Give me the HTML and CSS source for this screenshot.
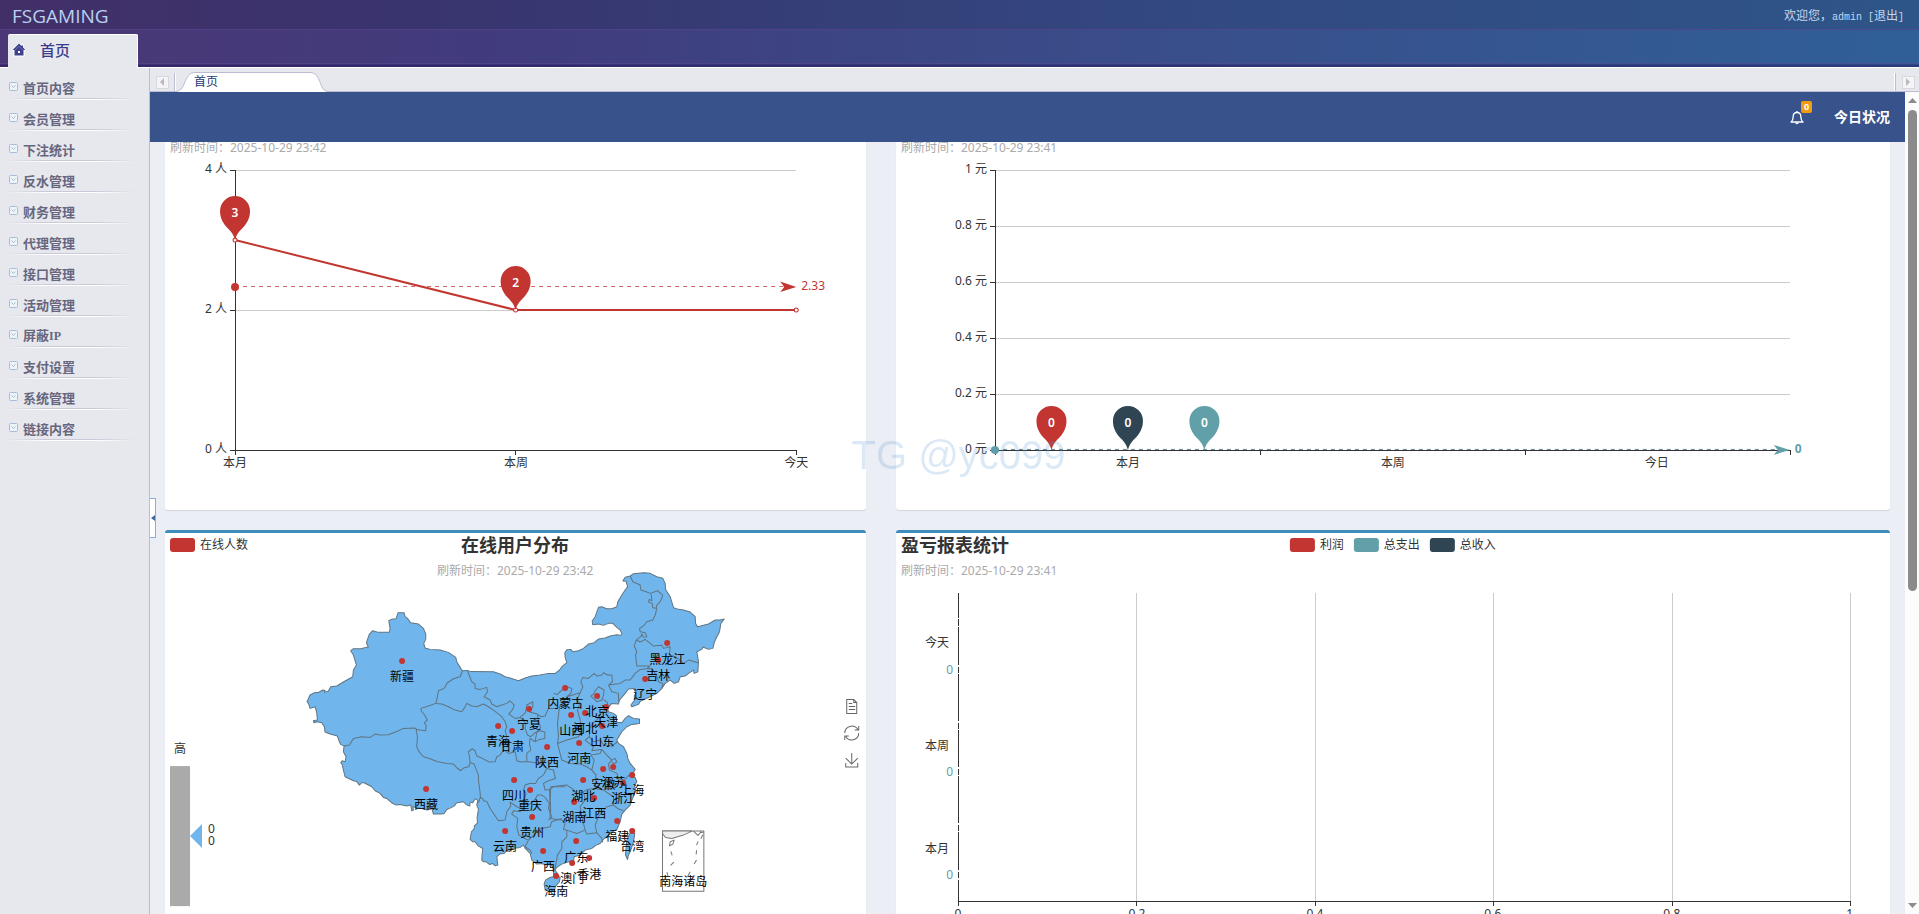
FILE: index.html
```html
<!DOCTYPE html>
<html lang="zh-CN">
<head>
<meta charset="utf-8">
<title>FSGAMING</title>
<link rel="stylesheet" href="styles.css">
</head>
<body>
<header class="topbar">
  <h1 class="brand">FSGAMING</h1>
  <p class="welcome">欢迎您，<span class="latin">admin [</span><a href="#logout">退出</a><span class="latin">]</span></p>
</header>
<nav class="mainnav">
  <a class="mainnav-item" href="#home">
    <svg class="home-icon" width="14" height="14" viewBox="0 0 14 14" aria-hidden="true"><path d="M7 0L0 6.500L1.500 8.500V13.500H13V8.500L14 6.500L11.500 4V1.500H9V2Z" fill="#fff"/><path d="M7 .5L.5 7H2.500V12.500H11.500V7H13.500L11 4.500V2.500H9.500V3Z" fill="#40408f"/><path d="M2.500 7.500L7 3.300L11.500 7.500" fill="none" stroke="#8c8cc0" stroke-width="0.600"/><rect x="6" y="8" width="2" height="2" fill="#fff"/></svg>
    首页
  </a>
</nav>
<div class="workspace">
  <aside class="sidebar">
    <svg width="0" height="0" class="defs" aria-hidden="true"><symbol id="chev" viewBox="0 0 9 9"><rect x=".5" y=".5" width="8" height="8" rx="1" fill="#eef3f8" stroke="#a9bdd6"/><path d="M2.500 3.500L4.500 5.500L6.500 3.500" fill="none" stroke="#a3bdd8"/></symbol></svg>
    <ul class="menu">
      <li><a href="#m1"><svg class="chev"><use href="#chev"/></svg>首页内容</a></li>
      <li><a href="#m2"><svg class="chev"><use href="#chev"/></svg>会员管理</a></li>
      <li><a href="#m3"><svg class="chev"><use href="#chev"/></svg>下注统计</a></li>
      <li><a href="#m4"><svg class="chev"><use href="#chev"/></svg>反水管理</a></li>
      <li><a href="#m5"><svg class="chev"><use href="#chev"/></svg>财务管理</a></li>
      <li><a href="#m6"><svg class="chev"><use href="#chev"/></svg>代理管理</a></li>
      <li><a href="#m7"><svg class="chev"><use href="#chev"/></svg>接口管理</a></li>
      <li><a href="#m8"><svg class="chev"><use href="#chev"/></svg>活动管理</a></li>
      <li><a href="#m9"><svg class="chev"><use href="#chev"/></svg><span>屏蔽<span class="menu-latin">IP</span></span></a></li>
      <li><a href="#m10"><svg class="chev"><use href="#chev"/></svg>支付设置</a></li>
      <li><a href="#m11"><svg class="chev"><use href="#chev"/></svg>系统管理</a></li>
      <li><a href="#m12"><svg class="chev"><use href="#chev"/></svg>链接内容</a></li>
    </ul>
  </aside>
  <main class="main">
    <div class="tabs">
      <span class="tab-edge left"><button class="scroll-btn" type="button" aria-label="向左"><svg width="12" height="12"><path d="M8 2V10L4 6Z" fill="#b9b9bd"/></svg></button></span>
      <a class="tab" href="#home"><svg class="tab-shape" width="150" height="20" viewBox="0 0 150 20" aria-hidden="true"><path d="M0 19.500C9 18 7 1 17 .5H134C144 1 142 18 150 19.500V20H0Z" fill="#fff"/><path d="M0 19.500C9 18 7 1 17 .5H134C144 1 142 18 150 19.500" fill="none" stroke="#bcbcd2"/></svg><span class="tab-label">首页</span></a>
      <span class="tab-edge right"><button class="scroll-btn" type="button" aria-label="向右"><svg width="12" height="12"><path d="M4 2V10L8 6Z" fill="#b9b9bd"/></svg></button></span>
    </div>
    <div class="frame">
      <div class="page">
        <div class="navbar">
          <button class="bell" type="button" aria-label="通知">
            <svg width="14" height="15" viewBox="0 0 14 15" aria-hidden="true"><path d="M1 12C3 10.500 3.200 8.500 3.200 6.500C3.200 4 4.500 2.500 7 2.500S10.800 4 10.800 6.500C10.800 8.500 11 10.500 13 12Z" fill="none" stroke="#fff" stroke-width="1.300" stroke-linejoin="round"/><path d="M6.300 1H7.700V3H6.300ZM5.200 12.500H8.800A1.800 1.800 0 0 1 5.200 12.500Z" fill="#fff"/></svg>
            <span class="badge">0</span>
          </button>
          <a class="today" href="#today">今日状况</a>
        </div>
        <div class="charts">
          <section class="panel">
            <svg class="chart" viewBox="165 142 701 368">
              <defs><path id="pin" d="M0 0C-1.500 -6 -4.500 -9 -8.500 -13C-12 -17 -15 -22 -15 -29A15 15 0 1 1 15 -29C15 -22 12 -17 8.500 -13C4.500 -9 1.500 -6 0 0Z"/></defs>
              <text class="sub" x="170" y="152">刷新时间：2025-10-29 23:42</text>
              <path class="grid" d="M236 170.500H796M236 310.500H796"/>
              <path class="axis" d="M235.500 170V455M230 170.500H236M230 310.500H236M230 450.500H797M515.500 450V455M796.500 450V455"/>
              <g class="end"><text x="227" y="173">4 人</text><text x="227" y="313">2 人</text><text x="227" y="453">0 人</text></g>
              <g class="mid"><text x="235" y="467">本月</text><text x="516" y="467">本周</text><text x="796" y="467">今天</text></g>
              <path d="M235 240L515.500 310H796" fill="none" stroke="#c23531" stroke-width="2"/>
              <path d="M235 286.500H784" stroke="#c23531" stroke-dasharray="4 4" stroke-opacity=".75"/>
              <circle cx="235" cy="287" r="4" fill="#c23531"/>
              <path d="M796 287L780 281.500L784 287L780 292Z" fill="#c23531"/>
              <g fill="#fff" stroke="#c23531"><circle cx="235" cy="240" r="2"/><circle cx="515.500" cy="310" r="2"/><circle cx="796" cy="310" r="2"/></g>
              <g fill="#c23531"><use href="#pin" x="235" y="240"/><use href="#pin" x="515.500" y="310"/></g>
              <text x="801" y="290" class="red">2.33</text>
              <g class="mid pin-label"><text x="235" y="217">3</text><text x="515.500" y="287">2</text></g>
            </svg>
          </section>
          <section class="panel">
            <svg class="chart" viewBox="896 142 994 368">
              <text class="sub" x="901" y="152">刷新时间：2025-10-29 23:41</text>
              <path class="grid" d="M996 170.500H1790M996 226.500H1790M996 282.500H1790M996 338.500H1790M996 394.500H1790"/>
              <path class="axis" d="M995.500 170V455M990 170.500H996M990 226.500H996M990 282.500H996M990 338.500H996M990 394.500H996M990 450.500H1791M1260.500 450V455M1525.500 450V455M1790.500 450V455"/>
              <g class="end"><text x="987" y="173">1 元</text><text x="987" y="229">0.8 元</text><text x="987" y="285">0.6 元</text><text x="987" y="341">0.4 元</text><text x="987" y="397">0.2 元</text><text x="987" y="453">0 元</text></g>
              <g class="mid"><text x="1128" y="467">本月</text><text x="1393" y="467">本周</text><text x="1657" y="467">今日</text></g>
              <path class="average" d="M995 449.500H1778"/>
              <circle cx="995" cy="450" r="4" fill="#61a0a8"/>
              <path d="M1790 450L1774 445L1778 450L1774 455Z" fill="#61a0a8"/>
              <use href="#pin" x="1051.500" y="450" fill="#c23531"/><use href="#pin" x="1128" y="450" fill="#2f4554"/><use href="#pin" x="1204.500" y="450" fill="#61a0a8"/>
              <g class="mid pin-label"><text x="1051.500" y="427">0</text><text x="1128" y="427">0</text><text x="1204.500" y="427">0</text></g>
              <text x="1795" y="453" class="teal strong">0</text>
            </svg>
          </section>
          <section class="panel titled">
            <svg class="chart" viewBox="165 533 701 400">
              <rect x="170" y="538" width="25" height="14" rx="3" fill="#c23531"/>
              <text x="200" y="549">在线人数</text>
              <text x="515" y="552" class="mid title">在线用户分布</text>
              <text x="515" y="575" class="mid sub">刷新时间：2025-10-29 23:42</text>
              <g class="land" transform="translate(290 560) scale(.333333)">
                <path d="M540 726L539 738L528 733L520 725L500 728L492 738L480 744L470 748L462 760L455 762L430 762L425 745L412 750L395 745L368 740L370 750L365 752L362 735L350 738L330 733L318 735L305 728L290 715L280 712L270 700L255 692L245 680L222 668L215 668L208 675L200 664L190 662L165 650L160 630L157 615L152 608L156 602L165 605L168 590L160 575L162 558L152 553L148 545L142 528L120 522L105 516L103 500L95 488L82 485L72 488L70 482L82 480L80 458L75 440L60 445L56 432L51 425L60 405L75 397L85 397L98 390L105 391L103 397L115 393L122 380L140 378L160 366L188 350L190 330L199 315L190 285L182 272L190 266L212 266L228 262L235 262L229 248L238 222L248 212L265 217L298 217L300 205L296 182L304 178L318 176L324 158L342 158L345 170L352 175L362 188L385 192L400 205L407 222L407 238L401 250L405 264L420 268L450 270L475 277L497 292L500 305L512 325L517 332L532 331L540 334"/>
              </g>
              <g class="land" transform="translate(470 540) scale(.333333)">
                <path d="M0 394L70 395L90 402L105 410L120 414L145 422L165 414L185 408L210 405L235 400L255 400L268 390L275 380L290 368L285 352L284 338L290 329L302 328L308 335L325 332L340 325L355 312L372 308L385 297L405 294L420 288L440 284L452 286L455 280L450 270L440 262L428 250L415 250L400 256L385 252L368 254L366 243L375 230L385 202L395 200L410 206L425 206L440 200L443 185L455 165L465 150L472 140L468 124L458 123L465 112L480 108L490 101L520 98L540 100L560 110L578 115L585 130L586 148L600 170L610 203L625 208L640 210L660 216L675 230L676 250L682 260L715 252L735 240L750 240L762 237L752 250L748 275L740 290L733 305L728 325L715 328L698 321L695 328L680 335L685 365L683 395L672 400L670 390L655 400L645 408L630 410L625 425L612 430L600 420L585 430L575 445L560 460L530 475L510 484L505 493L485 500L482 495L494 480L492 468L498 458L490 445L475 447L465 460L448 480L445 492L425 490L412 505L415 515L430 520L440 528L430 545L455 548L465 535L475 527L490 535L508 537L508 550L485 553L470 560L455 575L440 600L445 610L460 620L470 640L473 655L480 670L495 688L488 700L474 707L495 712L500 725L493 735L496 750L492 765L485 780L480 795L465 810L455 822L450 845L440 868L425 876L410 890L400 897L390 910L378 915L365 925L345 930L330 945L312 950L310 965L295 965L275 972L260 982L254 990L262 1000L262 1012L250 1005L250 985L240 970L228 975L215 970L200 972L185 960L180 940L165 925L160 915L150 922L125 925L118 935L110 930L102 940L88 942L80 950L83 975L75 977L68 970L58 973L48 965L40 965L35 960L36 940L38 925L25 918L15 905L8 905L0 898L4 875L12 866L13 857L22 849L21 832L25 808L20 795L23 780L15 776L8 788L0 786"/>
                <path class="patch" d="M-6 398H6V780L-6 786Z"/>
              </g>
              <g class="border" transform="translate(290 560) scale(.333333)">
                <path d="M517 332L510 350L490 356L472 368L462 385L445 392L442 410L437 430L415 438L392 445L395 455L403 464L412 480L403 488L408 496L407 512L390 510L380 508L375 504L340 505L318 515L295 524L270 525L255 522L240 532L215 530L190 535L178 555L162 558M378 508L382 530L380 560L386 574L400 590L420 596L440 604L470 610L490 612L500 623L512 632L520 624L536 620L540 608L538 590L535 575L546 566L555 572L560 588L575 594L590 602L598 606L615 605L620 590L630 585L640 570M540 607L552 612L558 628L565 645L565 660L569 690L571 710L565 728M437 430L455 432L475 440L490 448L515 455L522 445L530 430L545 438L560 440L580 432L595 440L610 450L635 470L645 485L650 500L645 512L650 530L645 548L636 552L640 572M532 332L545 365L555 372L555 385L570 388L590 382L592 395L582 410L600 420L605 432L620 440L635 435L650 430L660 422L672 435L668 448L656 462L675 475L690 472L706 458L710 435L728 425L728 440L718 456L742 462L752 470L765 468L775 445L800 445M690 472L706 488L705 505L712 525L722 530L735 518L748 512L764 516L764 535L748 538L735 545L720 535L718 550L722 570L710 580L710 604L692 606L680 602L675 575L655 580L645 572M735 545L740 515L752 502L745 485L742 462M710 604L732 607L755 612L770 625L760 645L745 655L736 670L718 670L705 675L700 690L708 700L702 720L715 735L735 718L742 705L755 705L765 712L778 730L775 745L785 770L775 780M571 712L578 715L580 722L590 724L600 745L625 782L645 780L650 755L662 738L660 726L680 740L700 745M700 745L690 755L670 752L665 762L683 775L680 800L686 825L704 835L715 840L750 806L780 800L784 785L815 775M715 840L705 860L720 870L725 880M770 625L790 630L796 655L775 662L760 670L765 690L778 688L790 680L825 680M778 688L782 755"/>
              </g>
              <g class="border" transform="translate(470 540) scale(.333333)">
                <path d="M250 460L262 463L275 450L290 440L305 445L302 460L290 470L330 458L338 440L332 425L338 412L355 415L372 400L380 408L395 405L400 398L412 405L425 405L427 425L415 435L425 455L445 460L445 485M330 458L320 480L330 490L322 510L330 540L335 570L325 590L290 600L262 610M290 470L268 500L262 550L265 590L262 610L275 660L300 670L330 672L350 680L365 690M415 435L450 430L465 420L480 420L495 400L510 388L530 386L540 378L500 378L496 345L500 335L492 318L498 300L510 306L525 298L540 310L550 318L575 316L580 325L600 320L598 345L615 350L640 370L655 360L683 368M530 386L545 385L560 408L565 425L578 430L575 445M480 108L488 125L510 135L512 150L528 155L540 160L562 152L578 166L570 185L560 195L558 205L548 203L546 190L535 186L537 178L545 182L543 162M560 205L555 225L548 240L530 245L520 258L508 265L510 275L525 278L530 290L520 292L515 282L512 290L498 300M370 462L375 452L385 440L402 450L400 465L395 480L380 485L370 475L362 468ZM400 478L412 488L410 510L395 515L385 535L370 548L358 565L358 590L370 605L390 600L400 615L425 618L442 605M358 590L345 600L370 620L365 632L395 628L410 645L425 660L415 672L418 690L440 700L445 715L462 720L474 707M425 660L435 655L440 665L430 672L425 665M395 628L390 640L362 645L372 660L365 690L378 705L375 720L385 735L372 745L352 748L340 755L320 762L310 748L290 735L242 740M372 745L400 750L418 730L445 730L445 715M400 750L430 770L430 795L442 805L460 812M430 795L410 800L385 830L375 855L380 878L350 882L345 870L320 880L290 870L290 890L275 905L275 925L262 945L254 990M340 755L345 780L330 800L335 830L345 870M242 740L240 780L240 835L275 840L285 850L280 868L290 870M380 878L395 895L398 907"/>
              </g>
              <g class="land" transform="translate(470 540) scale(.333333)">
                <path d="M222 1032L226 1020L240 1012L262 1006L270 1012L268 1025L255 1040L253 1052L240 1055L225 1048ZM486 876L494 880L490 905L482 930L474 948L472 958L466 944L468 920L470 900L478 882Z"/>
              </g>
              <g class="inset" transform="translate(470 540) scale(.333333)">
                <path d="M577 873H701V1053H577Z"/><path class="shore" d="M577 880L586 892L605 895L640 885L665 873H577Z"/><path d="M670 873L683 886L690 878L701 876M692 873L690 878M600 905L612 900L608 912L598 917ZM602 934L606 946M601 976L611 966M698 884L692 896M684 904L679 915M679 930L678 943M679 960L672 972M660 995L652 1010M590 996L594 1010"/>
              </g>
              <g class="dots"><circle cx="667" cy="643" r="3"/><circle cx="658" cy="660" r="3"/><circle cx="645" cy="679" r="3"/><circle cx="565" cy="688" r="3"/><circle cx="597" cy="696" r="3"/><circle cx="606" cy="707" r="3"/><circle cx="571" cy="715" r="3"/><circle cx="585" cy="713" r="3"/><circle cx="602" cy="726" r="3"/><circle cx="529" cy="709" r="3"/><circle cx="498" cy="726" r="3"/><circle cx="512" cy="731" r="3"/><circle cx="547" cy="747" r="3"/><circle cx="579" cy="743" r="3"/><circle cx="613" cy="767" r="3"/><circle cx="603" cy="769" r="3"/><circle cx="632" cy="775" r="3"/><circle cx="623" cy="783" r="3"/><circle cx="583" cy="780" r="3"/><circle cx="514" cy="780" r="3"/><circle cx="530" cy="790" r="3"/><circle cx="574" cy="802" r="3"/><circle cx="594" cy="798" r="3"/><circle cx="532" cy="817" r="3"/><circle cx="505" cy="831" r="3"/><circle cx="617" cy="821" r="3"/><circle cx="632" cy="831" r="3"/><circle cx="576" cy="841" r="3"/><circle cx="543" cy="851" r="3"/><circle cx="589" cy="858" r="3"/><circle cx="572" cy="863" r="3"/><circle cx="556" cy="876" r="3"/><circle cx="402" cy="661" r="3"/><circle cx="426" cy="789" r="3"/></g>
              <g class="mid place"><text x="667" y="664">黑龙江</text><text x="658" y="680">吉林</text><text x="645" y="699">辽宁</text><text x="565" y="708">内蒙古</text><text x="597" y="716">北京</text><text x="606" y="727">天津</text><text x="571" y="735">山西</text><text x="585" y="733">河北</text><text x="602" y="746">山东</text><text x="529" y="729">宁夏</text><text x="498" y="746">青海</text><text x="512" y="751">甘肃</text><text x="547" y="767">陕西</text><text x="579" y="763">河南</text><text x="613" y="787">江苏</text><text x="603" y="789">安徽</text><text x="632" y="795">上海</text><text x="623" y="803">浙江</text><text x="583" y="801">湖北</text><text x="514" y="800">四川</text><text x="530" y="810">重庆</text><text x="574" y="822">湖南</text><text x="594" y="818">江西</text><text x="532" y="837">贵州</text><text x="505" y="851">云南</text><text x="617" y="841">福建</text><text x="632" y="851">台湾</text><text x="576" y="862">广东</text><text x="543" y="871">广西</text><text x="589" y="879">香港</text><text x="572" y="883">澳门</text><text x="556" y="896">海南</text><text x="402" y="681">新疆</text><text x="426" y="809">西藏</text><text x="683" y="886">南海诸岛</text></g>
              <text x="180" y="753" class="mid">高</text>
              <rect x="170" y="766" width="20" height="140" fill="#aaa"/>
              <path d="M190 836L202 824V848Z" fill="#70b6ec"/>
              <text x="208" y="833">0</text><text x="208" y="845">0</text>
              <g class="tools">
                <path d="M846.500 699.500H853.500L856.500 702.500V713.500H846.500ZM853.500 699.500V702.500H856.500M848.500 703.500H852M848.500 706.500H855M848.500 709.500H855"/>
                <path d="M844.500 733A7 7 0 0 1 857.500 729.500M858.500 726V730H854.500M858.500 733A7 7 0 0 1 845.500 736.500M844.500 740V736H848.500"/>
                <path d="M851.500 753V763M845.500 758L851.500 764L857.500 758M845.500 763V767H857.500V763"/>
              </g>
            </svg>
          </section>
          <section class="panel titled">
            <svg class="chart" viewBox="896 533 994 400">
              <text x="901" y="552" class="title">盈亏报表统计</text>
              <text x="901" y="575" class="sub">刷新时间：2025-10-29 23:41</text>
              <rect x="1290" y="538" width="25" height="14" rx="3" fill="#c23531"/><text x="1320" y="549">利润</text>
              <rect x="1354" y="538" width="25" height="14" rx="3" fill="#61a0a8"/><text x="1384" y="549">总支出</text>
              <rect x="1430" y="538" width="25" height="14" rx="3" fill="#2f4554"/><text x="1460" y="549">总收入</text>
              <path class="grid" d="M1136.500 593V901M1315.500 593V901M1493.500 593V901M1672.500 593V901M1850.500 593V901"/>
              <path class="axis" d="M958.500 593V618M958.500 619V626M958.500 627V665M958.500 667V673M958.500 674V721M958.500 723V729M958.500 730V767M958.500 769V775M958.500 776V823M958.500 825V831M958.500 832V870M958.500 872V878M958.500 880V906M958 901.500H1851M1136.500 902V906M1315.500 902V906M1493.500 902V906M1672.500 902V906M1850.500 902V906"/>
              <g class="end"><text x="949" y="647">今天</text><text x="949" y="750">本周</text><text x="949" y="853">本月</text></g>
              <g class="end teal"><text x="953" y="674">0</text><text x="953" y="776">0</text><text x="953" y="879">0</text></g>
              <g class="mid"><text x="958" y="918">0</text><text x="1137" y="918">0.2</text><text x="1315" y="918">0.4</text><text x="1493" y="918">0.6</text><text x="1672" y="918">0.8</text><text x="1850" y="918">1</text></g>
            </svg>
          </section>
        </div>
      </div>
      <div class="scrollbar" aria-hidden="true">
        <svg width="15" height="17"><path d="M3 11H12L7.500 6Z" fill="#8b8b8b"/></svg>
        <div class="track"><div class="thumb"></div></div>
        <svg width="15" height="17"><path d="M3 6H12L7.500 11Z" fill="#8b8b8b"/></svg>
      </div>
      <button class="collapse" type="button" aria-label="收起"><svg width="4" height="6"><path d="M4 0V6L0 3Z" fill="#3c68a8"/></svg></button>
    </div>
  </main>
</div>
<div class="watermark">TG @yc099</div>
</body>
</html>
```
FILE: styles.css
```css
* { box-sizing: border-box; }

body {
  margin: 0;
  height: 100vh;
  display: flex;
  flex-direction: column;
  overflow: hidden;
  background: #e7e8ed;
  font: 12px/16px "Noto Sans", "Noto Sans CJK SC", sans-serif;
  color: #333;
}

a { color: inherit; text-decoration: none; }

button { padding: 0; border: 0; background: none; font: inherit; }

.topbar {
  display: flex;
  align-items: center;
  justify-content: space-between;
  height: 29px;
  padding: 2px 15px 0 12px;
  background: linear-gradient(90deg, #422f68, #38356f 25%, #324a82 65%, #2e5588);
}

.brand {
  margin: 0;
  font: 400 19px/24px "Open Sans", sans-serif;
  color: #b9d0f0;
}

.welcome {
  margin: 0;
  padding-top: 3px;
  color: #c3d8f0;
}

.latin { font: 10px/16px "Liberation Mono", monospace; }

.mainnav {
  display: flex;
  align-items: flex-end;
  height: 39px;
  padding-left: 8px;
  border-top: 1px solid rgba(120, 90, 170, .45);
  border-bottom: 1px solid #fff;
  background:
    linear-gradient(rgba(30, 20, 90, 0) 33px, rgba(110, 90, 170, .5) 33px, rgba(30, 20, 90, .45) 35px),
    linear-gradient(90deg, #4b3776, #413b7c 25%, #38508c 65%, #305f97);
}

.mainnav-item {
  display: flex;
  align-items: center;
  gap: 14px;
  width: 130px;
  height: 34px;
  margin-bottom: -1px;
  padding: 0 0 3px 4px;
  border: solid #fff;
  border-width: 1px 1px 0 0;
  border-radius: 2px 2px 0 0;
  background: #e7e8ed;
  font-weight: 500;
  font-size: 15px;
  color: #3b3b8c;
}

.home-icon { flex: none; }

.workspace {
  flex: 1;
  display: flex;
  min-height: 0;
}

.sidebar {
  flex: none;
  width: 150px;
  padding-top: 1px;
  border-right: 1px solid #bcbcd2;
}

.defs { position: absolute; }

.menu {
  margin: 0;
  padding: 0;
  list-style: none;
}

.menu a {
  display: flex;
  align-items: center;
  gap: 5px;
  height: 31px;
  margin: 0 14px 0 6px;
  padding: 9px 0 3px 3px;
  background:
    linear-gradient(90deg, transparent, #fff 30%, #fff 70%, transparent) bottom / 100% 1px no-repeat,
    linear-gradient(90deg, transparent, #c9c9da 30%, #c9c9da 70%, transparent) 0 29px / 100% 1px no-repeat;
  font-weight: 700;
  font-size: 13px;
  color: #66667f;
}

.chev {
  flex: none;
  width: 9px;
  height: 9px;
  margin-bottom: 2px;
}

.menu-latin { font: 700 12px/16px "Liberation Serif", serif; }

.main {
  flex: 1;
  display: flex;
  flex-direction: column;
  min-width: 0;
}

.tabs {
  display: flex;
  height: 24px;
  padding-left: 6px;
  border-bottom: 1px solid #bcbcd2;
}

.tab-edge {
  display: flex;
  align-items: center;
  height: 18px;
  margin-top: 5px;
}

.tab-edge.left {
  padding-right: 5px;
  border-right: 1px solid #bcbcd2;
  box-shadow: 1px 0 #fff;
}

.tab-edge.right {
  margin-left: auto;
  padding: 0 4px 0 6px;
  border-left: 1px solid #bcbcd2;
  box-shadow: -1px 0 #fff;
}

.scroll-btn {
  display: block;
  width: 13px;
  height: 13px;
  border: 1px solid #d8d8dc;
  background: #f4f4f6;
}

.scroll-btn svg {
  display: block;
  margin: -1px;
}

.tab {
  position: relative;
  width: 150px;
  height: 20px;
  margin: 4px 0 0 2px;
  padding: 2px 0 0 17px;
  color: #22386f;
}

.tab-shape {
  position: absolute;
  top: 0;
  left: 0;
}

.tab-label { position: relative; }

.frame {
  position: relative;
  flex: 1;
  display: flex;
  min-height: 0;
}

.page {
  flex: 1;
  min-width: 0;
  overflow: hidden;
  background: #ebeef4;
}

.navbar {
  display: flex;
  align-items: center;
  justify-content: flex-end;
  gap: 30px;
  height: 50px;
  padding-right: 15px;
  background: #38538c;
  color: #fff;
}

.bell {
  position: relative;
  width: 14px;
  height: 15px;
  color: #fff;
}

.bell svg { display: block; }

.badge {
  position: absolute;
  top: -9px;
  left: 11px;
  width: 11px;
  height: 12px;
  border-radius: 2px;
  background: #f39c12;
  font-weight: 700;
  font-size: 9px;
  line-height: 12px;
  text-align: center;
}

.today {
  font-weight: 700;
  font-size: 14px;
}

.charts {
  display: grid;
  grid-template-columns: minmax(0, 5fr) minmax(0, 7fr);
  row-gap: 20px;
}

.panel {
  margin: 0 15px;
  border-radius: 0 0 3px 3px;
  background: #fff;
  box-shadow: 0 1px 1px rgba(0, 0, 0, .1);
}

.titled {
  border-top: 3px solid #3c8dbc;
  border-radius: 3px;
}

.chart {
  display: block;
  width: 100%;
  fill: #333;
}

.sub { fill: #aaa; }
.title { font-weight: 700; font-size: 18px; }
.mid { text-anchor: middle; }
.end { text-anchor: end; }
.red { fill: #c23531; }
.teal { fill: #61a0a8; }
.strong { font-weight: 700; }
.pin-label { fill: #fff; font-weight: 600; }
.grid { stroke: #ccc; fill: none; shape-rendering: crispEdges; }
.axis { stroke: #333; fill: none; shape-rendering: crispEdges; }
.average { stroke: #5f8492; stroke-dasharray: 4 4; }

.land,
.border,
.inset {
  fill: #70b6ec;
  stroke: #5f7482;
  stroke-width: 3;
  stroke-linejoin: round;
}

.border { fill: none; }
.patch { stroke: none; }
.inset { fill: none; stroke: #777; }
.shore { fill: #eee; }
.dots { fill: #c23531; }
.place { fill: #000; }
.tools { fill: none; stroke: #666; }

.scrollbar {
  flex: none;
  display: flex;
  flex-direction: column;
  width: 14px;
  background: #fcfcfc;
}

.track { flex: 1; }

.thumb {
  width: 9px;
  height: 61%;
  margin: 1px 0 0 3px;
  border-radius: 5px;
  background: #8b8b8b;
}

.collapse {
  position: absolute;
  top: 406px;
  left: 0;
  display: flex;
  align-items: center;
  justify-content: center;
  width: 6px;
  height: 40px;
  border: 1px solid #8fabd6;
  border-left: 0;
  background: #fff;
}

.watermark {
  position: fixed;
  top: 50%;
  left: 50%;
  transform: translate(-50%, -50%);
  padding: 0 2px 4px 0;
  font: 40px/48px "Liberation Sans", sans-serif;
  color: rgba(91, 155, 213, .22);
  white-space: nowrap;
  pointer-events: none;
}
```
